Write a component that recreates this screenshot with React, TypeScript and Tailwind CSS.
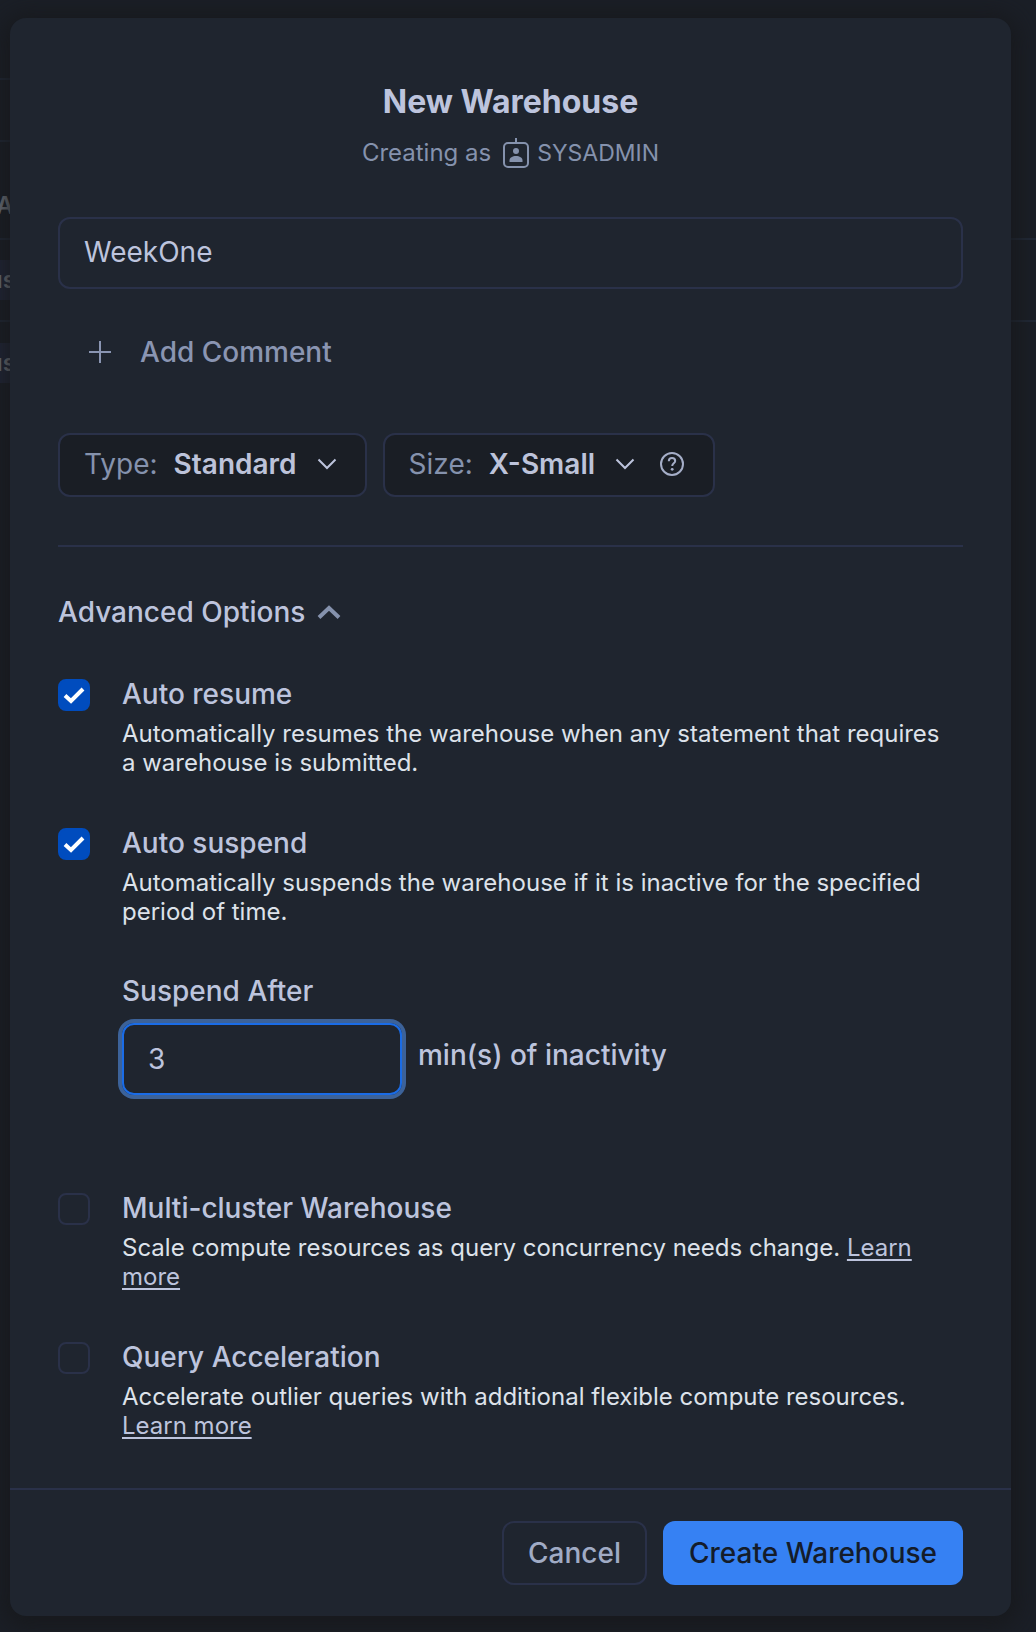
import { useState, type ReactNode } from "react";

function RoleIcon() {
  return (
    <svg width="26" height="30" viewBox="0 0 26 30" fill="none" className="shrink-0" aria-hidden="true">
      <path d="M13 0v5" stroke="currentColor" strokeWidth="2" />
      <rect x="1" y="5" width="24" height="24" rx="4" stroke="currentColor" strokeWidth="2" />
      <circle cx="13" cy="13" r="3" fill="currentColor" />
      <path d="M6.500 24v-1.500c0-3 3-4.500 6.500-4.500s6.500 1.500 6.500 4.500V24z" fill="currentColor" />
    </svg>
  );
}

function ChevronDown() {
  return (
    <svg width="20" height="12" viewBox="0 0 20 12" fill="none" className="shrink-0 pointer-events-none" aria-hidden="true">
      <path d="M1.500 1.500L10 10l8.500-8.500" stroke="#bdc4dd" strokeWidth="2" />
    </svg>
  );
}

function HelpIcon() {
  return (
    <svg width="26" height="26" viewBox="0 0 26 26" fill="none" aria-hidden="true">
      <circle cx="13" cy="13" r="11" stroke="currentColor" strokeWidth="2" />
      <path d="M9.800 10.300c0-2 1.300-3.300 3.200-3.300s3.200 1.200 3.200 2.900c0 2.400-3 2.500-3 5.100" stroke="currentColor" strokeWidth="2" />
      <circle cx="13.200" cy="18.300" r="1.400" fill="currentColor" />
    </svg>
  );
}

function Picker({ id, label, options, children }: { id: string; label: string; options: string[]; children?: ReactNode }) {
  return (
    <div className="flex h-16 items-center rounded-xl border-2 border-[#2a3149] bg-[#1a1e25] pr-7 pb-0.5 pl-6">
      <label htmlFor={id} className="mr-4 text-[#8592ad]">{label}</label>
      <select id={id} className="field-sizing-content mr-5 appearance-none bg-transparent font-semibold text-[#bdc3da] outline-none">
        {options.map((o) => (
          <option key={o}>{o}</option>
        ))}
      </select>
      <ChevronDown />
      {children}
    </div>
  );
}

function Option({ id, title, initial, description, children }: { id: string; title: string; initial?: boolean; description: ReactNode; children?: ReactNode }) {
  const [checked, setChecked] = useState(!!initial);
  return (
    <div className="flex gap-8">
      <span className="relative mt-px size-8 shrink-0">
        <input
          id={id}
          type="checkbox"
          checked={checked}
          onChange={(e) => setChecked(e.target.checked)}
          className="block size-8 appearance-none rounded-lg border-2 border-[#2a3149] checked:border-[#004cbe] checked:bg-[#004cbe]"
        />
        {checked && (
          <svg viewBox="0 0 32 32" fill="none" className="pointer-events-none absolute inset-0" aria-hidden="true">
            <path d="M7 16.500l6 5.500L25 10" stroke="white" strokeWidth="4" />
          </svg>
        )}
      </span>
      <div className="min-w-0 flex-1 pr-4">
        <label htmlFor={id} className="block font-medium leading-8">{title}</label>
        <p className="mt-[9px] text-2xl leading-[29px] text-[#dde2ea]">{description}</p>
        {children}
      </div>
    </div>
  );
}

function LearnMore() {
  return (
    <a href="#learn-more" className="text-[#bdc4dd] underline decoration-2 underline-offset-3">Learn more</a>
  );
}

function Backdrop() {
  return (
    <div className="absolute inset-0 overflow-hidden bg-[#1b1f27] text-2xl font-semibold text-[#7a7f88]" aria-hidden="true">
      <div className="mt-[78px] h-16 w-1/2 border-y-2 border-[#222a38]" />
      <div className="flex h-[98px] items-center border-b-2 border-[#222a38] pt-8">
        <span className="-ml-1">A</span>
      </div>
      <div className="flex h-[82px] items-center border-b-2 border-[#222a38]">
        <span className="-ml-3 flex h-10 w-12 items-center bg-[#22273a]">us</span>
      </div>
      <div className="flex h-[82px] items-center">
        <span className="-ml-3 flex h-10 w-12 items-center bg-[#22273a]">us</span>
      </div>
    </div>
  );
}

export default function App() {
  const [name, setName] = useState("WeekOne");
  const [minutes, setMinutes] = useState("3");
  return (
    <div className="relative min-h-screen overflow-hidden bg-[#1b1f27] pt-[18px] pr-[25px] pb-4 pl-[10px] font-[Inter,sans-serif] text-[28px] text-[#bdc4dd]">
      <Backdrop />
      <form
        role="dialog"
        aria-labelledby="title"
        onSubmit={(e) => e.preventDefault()}
        className="relative rounded-2xl bg-[#1f252f] shadow-[0_4px_24px_8px_#16181acc]"
      >
        <div className="px-12 pt-16 pb-12">
          <header className="text-center">
            <h1 id="title" className="text-[32px] leading-10 font-bold">New Warehouse</h1>
            <p className="mt-[13px] flex items-center justify-center text-2xl leading-9 text-[#8592ad]">
              Creating as
              <span className="mr-2 ml-3"><RoleIcon /></span>
              <span className="text-[23px]">SYSADMIN</span>
            </p>
          </header>

          <input
            aria-label="Name"
            value={name}
            onChange={(e) => setName(e.target.value)}
            className="mt-[46px] block h-[72px] w-full rounded-xl border-2 border-[#2a3149] bg-transparent px-6 pb-0.5 outline-none"
          />

          <button type="button" className="mt-[43px] ml-[30px] flex items-center gap-7 font-medium leading-10 text-[#8a95b2]">
            <svg width="24" height="24" viewBox="0 0 24 24" aria-hidden="true">
              <path d="M12 1v22M1 12h22" stroke="currentColor" strokeWidth="2" />
            </svg>
            Add Comment
          </button>

          <div className="mt-[61px] flex flex-wrap gap-4">
            <Picker id="type" label="Type:" options={["Standard", "Snowpark-optimized"]} />
            <Picker id="size" label="Size:" options={["X-Small", "Small", "Medium", "Large"]}>
              <button type="button" aria-label="About sizes" className="ml-6 text-[#a5aec8]">
                <HelpIcon />
              </button>
            </Picker>
          </div>

          <hr className="mt-12 border-t-2 border-[#2a3149]" />

          <button type="button" aria-expanded="true" className="mt-[49px] flex items-center gap-3 font-medium leading-8">
            Advanced Options
            <svg width="24" height="16" viewBox="0 0 24 16" fill="none" aria-hidden="true">
              <path d="M2 13.500L12 4l10 9.500" stroke="#8592ad" strokeWidth="4" />
            </svg>
          </button>

          <div className="mt-[50px] flex flex-col gap-[50px]">
            <Option
              id="resume"
              title="Auto resume"
              initial
              description="Automatically resumes the warehouse when any statement that requires a warehouse is submitted."
            />
            <Option
              id="suspend"
              title="Auto suspend"
              initial
              description="Automatically suspends the warehouse if it is inactive for the specified period of time."
            >
              <div className="mt-[49px] mb-[47px]">
                <label htmlFor="minutes" className="block font-medium leading-8">Suspend After</label>
                <div className="mt-4 flex items-center gap-4">
                  <input
                    id="minutes"
                    inputMode="numeric"
                    value={minutes}
                    onChange={(e) => setMinutes(e.target.value)}
                    className="h-[72px] w-[280px] rounded-xl border-2 border-[#1a6ce7] bg-transparent px-6 outline-none ring-4 ring-[#3c6299]"
                  />
                  <span className="pb-2 font-medium">min(s) of inactivity</span>
                </div>
              </div>
            </Option>
            <Option
              id="cluster"
              title="Multi-cluster Warehouse"
              description={<>Scale compute resources as query concurrency needs change. <LearnMore /></>}
            />
            <Option
              id="acceleration"
              title="Query Acceleration"
              description={<>Accelerate outlier queries with additional flexible compute resources. <LearnMore /></>}
            />
          </div>
        </div>

        <footer className="flex justify-end gap-4 border-t-2 border-[#2a3149] px-12 py-[31px]">
          <button type="button" className="h-16 rounded-xl border-2 border-[#2a3149] px-6 font-medium text-[#a0abc5]">Cancel</button>
          <button type="submit" className="h-16 rounded-xl bg-[#3681f3] px-[26px] font-medium text-[#141c2a]">Create Warehouse</button>
        </footer>
      </form>
    </div>
  );
}
